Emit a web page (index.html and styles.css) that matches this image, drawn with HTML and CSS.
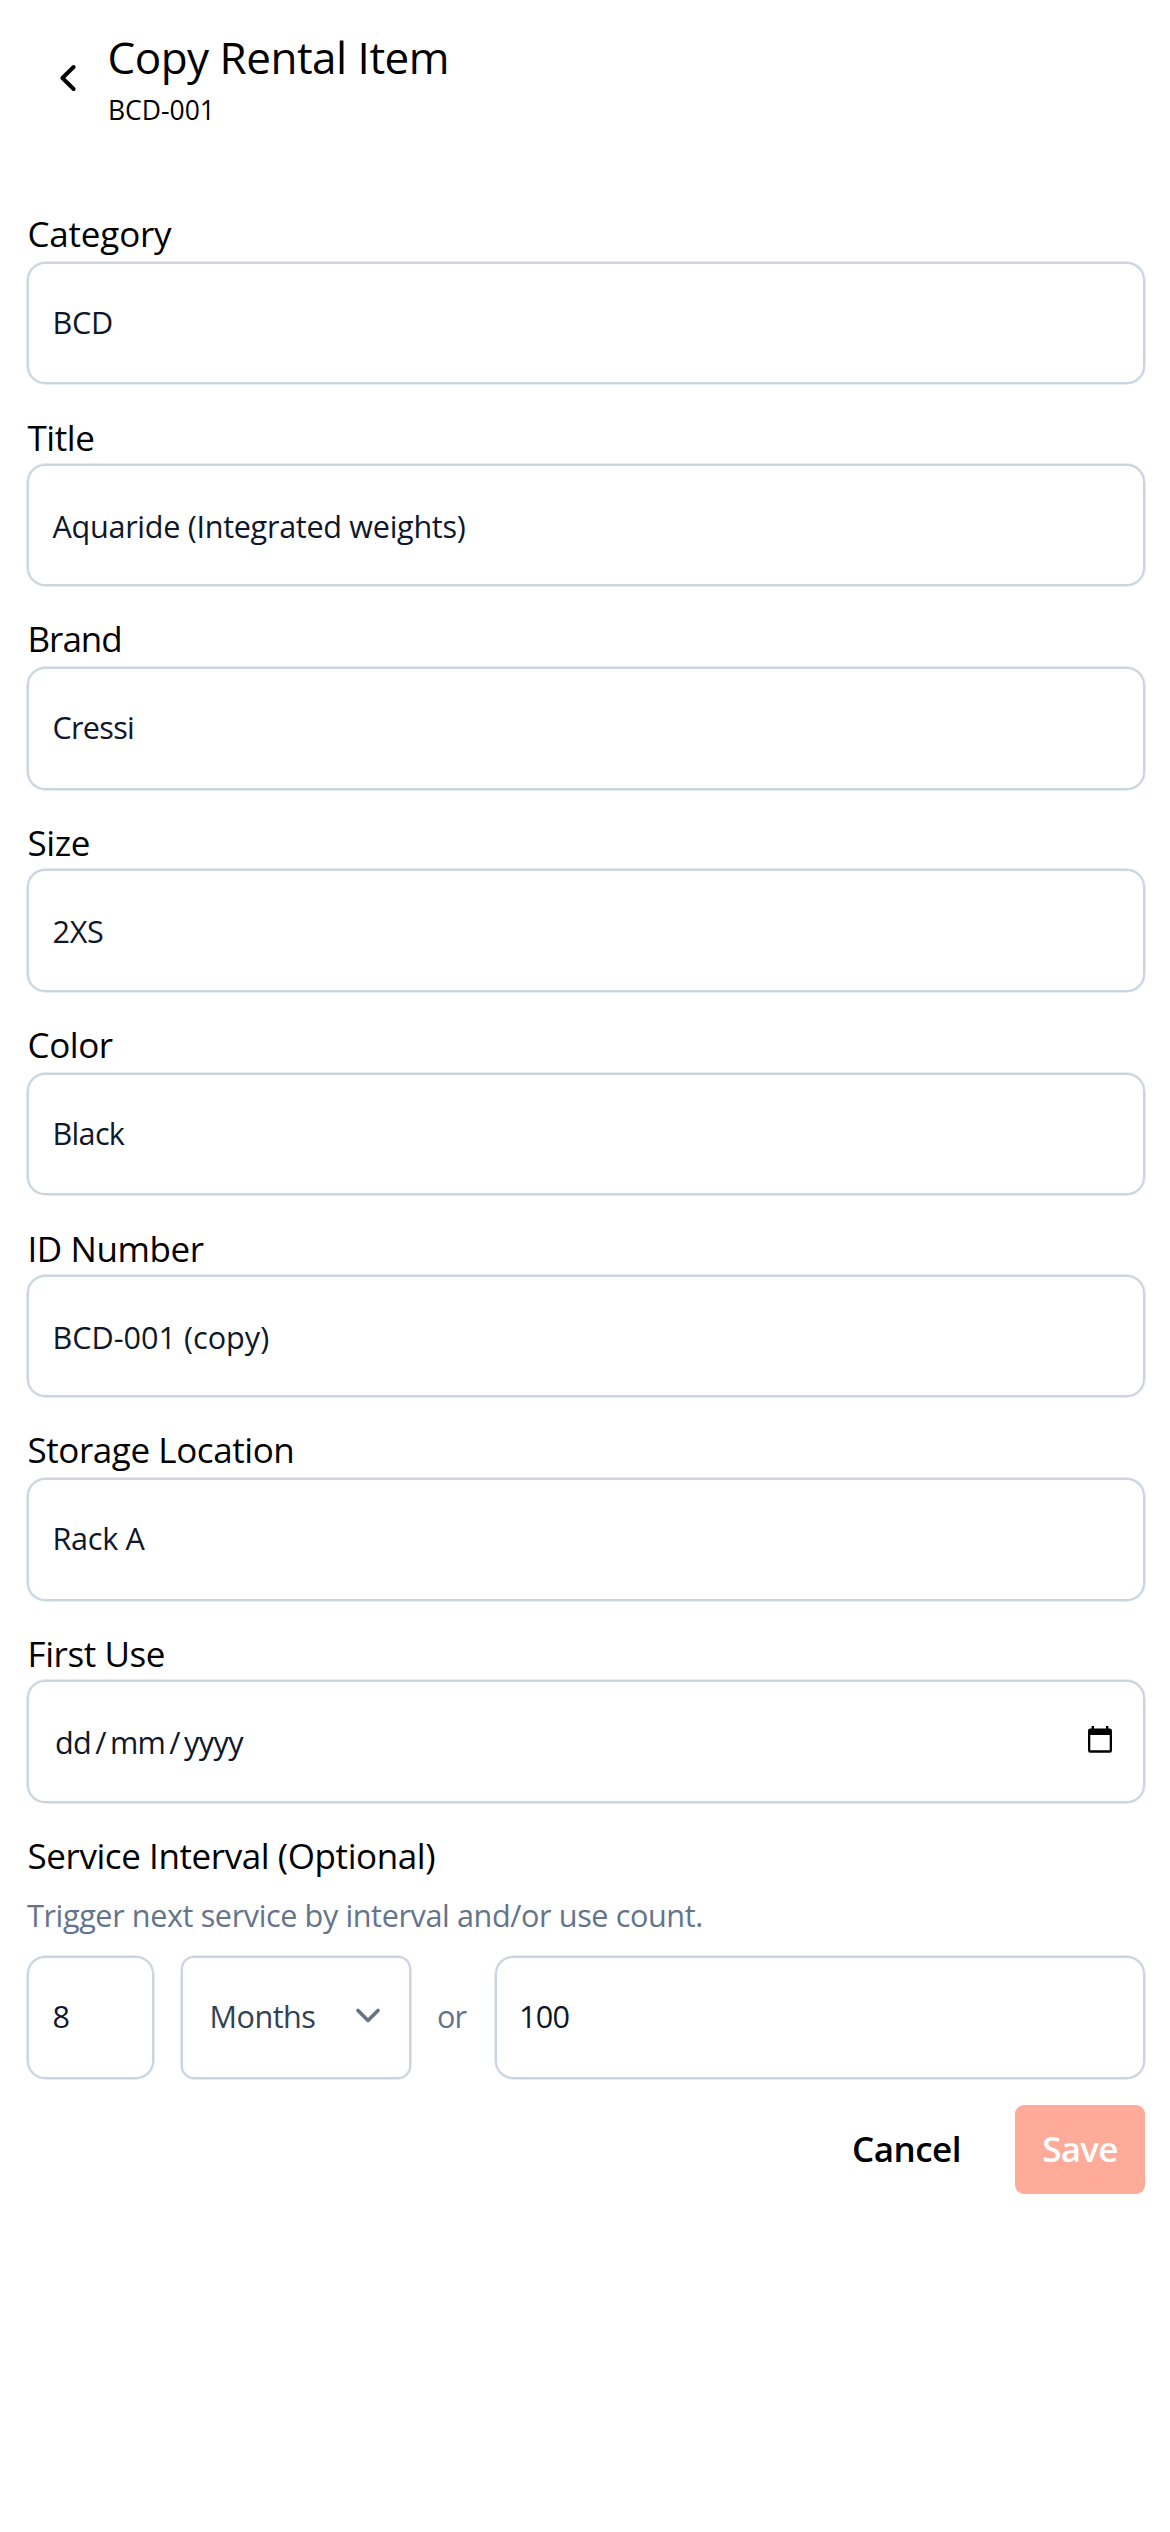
FILE: index.html
```html
<!DOCTYPE html>
<html lang="en">
<head>
<meta charset="utf-8">
<title>Copy Rental Item</title>
<link rel="stylesheet" href="styles.css">
</head>
<body>
<main class="page">
  <header class="header">
    <button class="back" type="button" aria-label="Back">
      <svg width="20" height="30" viewBox="0 0 20 30" fill="none" stroke="currentColor" stroke-width="4" stroke-linecap="round" stroke-linejoin="round"><path d="M15.6 4 4.4 15 15.6 26"/></svg>
    </button>
    <div>
      <h1 class="title">Copy Rental Item</h1>
      <p class="subtitle">BCD-001</p>
    </div>
  </header>

  <form class="form">
    <div class="field"><div class="label label-wide">Category</div><div class="input">BCD</div></div>
    <div class="field"><div class="label">Title</div><div class="input">Aquaride (Integrated weights)</div></div>
    <div class="field"><div class="label label-tight">Brand</div><div class="input input-tight">Cressi</div></div>
    <div class="field"><div class="label">Size</div><div class="input">2XS</div></div>
    <div class="field"><div class="label">Color</div><div class="input input-tight">Black</div></div>
    <div class="field"><div class="label">ID Number</div><div class="input input-code">BCD-001 (copy)</div></div>
    <div class="field"><div class="label">Storage Location</div><div class="input">Rack A</div></div>
    <div class="field">
      <div class="label">First Use</div>
      <div class="input input-date">
        <span class="date"><span>dd</span><span>/</span><span>mm</span><span>/</span><span>yyyy</span></span>
        <svg class="calendar" width="24" height="27" viewBox="0 0 24 27"><path fill="currentColor" fill-rule="evenodd" d="M3.6 0H6v2.6h12V0h2.4v2.6h1.2A2.4 2.4 0 0 1 24 5v19.4a2.4 2.4 0 0 1-2.4 2.4H2.4A2.4 2.4 0 0 1 0 24.4V5a2.4 2.4 0 0 1 2.4-2.4h1.2zM2.3 9v15.3h19.4V9z"/></svg>
      </div>
    </div>
    <div class="service">
      <div class="label">Service Interval (Optional)</div>
      <p class="hint">Trigger next service by interval and/or use count.</p>
      <div class="interval">
        <div class="input input-count">8</div>
        <div class="input select">
          <span>Months</span>
          <svg width="26" height="18" viewBox="0 0 26 18" fill="none" stroke="#6b7280" stroke-width="3.6" stroke-linecap="round" stroke-linejoin="round"><path d="M3 3.4 13 13.4 23 3.4"/></svg>
        </div>
        <span class="or">or</span>
        <div class="input input-uses">100</div>
      </div>
    </div>
    <div class="actions">
      <button class="cancel" type="button">Cancel</button>
      <button class="save" type="button">Save</button>
    </div>
  </form>
</main>
</body>
</html>
```
FILE: styles.css
```css
* {
  box-sizing: border-box;
  margin: 0;
  padding: 0;
}

body {
  background: #fff;
  color: #000;
  font-family: "Open Sans", "Noto Sans", sans-serif;
}

button {
  border: 0;
  background: none;
  color: inherit;
  font: inherit;
}

.page {
  width: 1170px;
  min-height: 2532px;
  padding: 26px 25px 0 26.5px;
}

.header {
  display: flex;
  height: 181.5px;
}

.back {
  width: 81px;
  height: 103px;
  padding-left: 31.5px;
  display: flex;
  align-items: center;
}

.title {
  font-size: 44px;
  font-weight: 400;
  line-height: 62px;
  letter-spacing: -0.5px;
}

.subtitle {
  font-size: 26.5px;
  line-height: 40px;
  padding-top: 2px;
  padding-left: 0.5px;
}

.label {
  height: 54px;
  padding-left: 1px;
  font-size: 35px;
  line-height: 52px;
  letter-spacing: -0.42px;
}

.label-wide {
  letter-spacing: -0.2px;
}

.label-tight {
  letter-spacing: -1px;
}

.field {
  margin-bottom: 25.5px;
}

.field:nth-child(even) {
  margin-bottom: 27px;
}

.field:nth-child(even) .label {
  padding-top: 2px;
}

.input {
  display: flex;
  align-items: center;
  height: 122.5px;
  padding: 0 24px 2px;
  border: 2px solid #cbd5e1;
  border-radius: 18px;
  box-shadow: 0 0 0 0.5px #cbd5e1;
  color: #0f172a;
  font-size: 30.6px;
  letter-spacing: -0.3px;
}

.field:nth-child(even) .input {
  padding-top: 2px;
  padding-bottom: 0;
}

.input-tight {
  letter-spacing: -0.7px;
}

.field .input-code {
  letter-spacing: 0;
}

.input-date {
  justify-content: space-between;
  padding-right: 31px;
  padding-left: 26.5px;
}

.date {
  display: flex;
  gap: 4px;
  letter-spacing: -0.6px;
}

.calendar {
  color: #000;
  margin-bottom: 5px;
}

.hint {
  margin-top: 9.5px;
  padding-left: 0.5px;
  color: #64748b;
  font-size: 30.6px;
  line-height: 45px;
  letter-spacing: -0.39px;
}

.interval {
  display: flex;
  align-items: center;
  margin-top: 18px;
}

.interval .input {
  padding-bottom: 3px;
}

.input-count {
  width: 127px;
}

.select {
  width: 230.5px;
  margin-left: 27px;
  justify-content: space-between;
  padding-right: 28px;
  padding-left: 27px;
  border-radius: 13px;
  color: #334155;
  letter-spacing: -0.5px;
}

.or {
  width: 84px;
  padding-right: 3px;
  padding-bottom: 3px;
  color: #64748b;
  font-size: 30.6px;
  letter-spacing: -1px;
  text-align: center;
}

.input-uses {
  flex: 1;
  padding-left: 22px;
  letter-spacing: -0.7px;
}

.actions {
  display: flex;
  justify-content: flex-end;
  margin-top: 26.5px;
  font-size: 35px;
  font-weight: 600;
}

.actions button {
  height: 89px;
  padding: 0 27px 3px;
}

.actions .cancel {
  margin-right: 27px;
  letter-spacing: -0.5px;
}

.actions .save {
  width: 130px;
  border-radius: 9px;
  background: #ffab9a;
  color: #fff;
  letter-spacing: -0.7px;
}
```
